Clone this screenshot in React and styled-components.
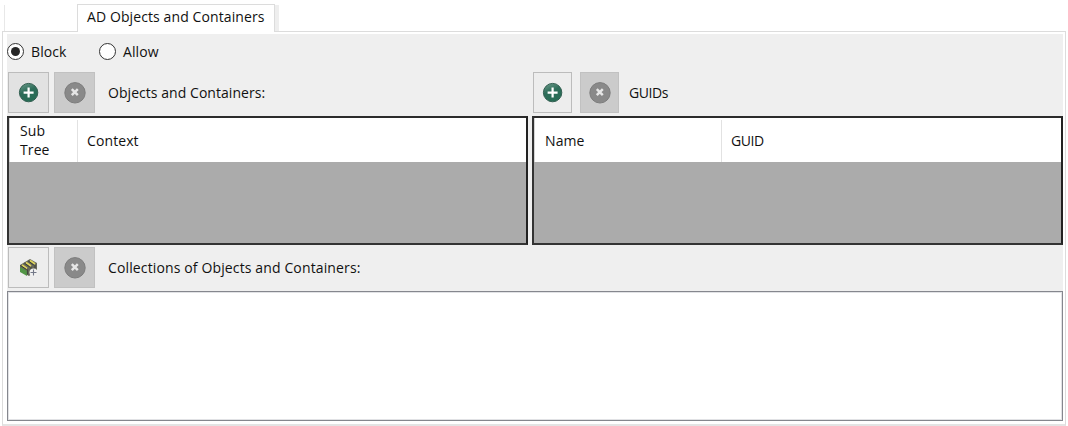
import React from 'react';
import styled, { createGlobalStyle } from 'styled-components';

const Global = createGlobalStyle`
  * { box-sizing: border-box; }
  html, body { margin: 0; background: #fff; }
  body {
    font-family: "Open Sans", "Noto Sans", sans-serif;
    font-size: 14px;
    line-height: 19px;
    letter-spacing: 0.1px;
    color: #111;
  }
`;

const Window = styled.main`
  width: 1068px;
  height: 426px;
  padding: 4px 2px 0;
  display: flex;
  flex-direction: column;
`;

const TabStrip = styled.nav`
  display: flex;
  height: 28px;
  padding-left: 2px;
  align-items: flex-end;
`;

const TabEdge = styled.span`
  width: ${p => p.$width}px;
  height: 26px;
  border-left: ${p => (p.$filled ? '0' : '1px solid #e8e8e8')};
  background: ${p => (p.$filled ? '#eee' : '#fff')};
  margin-bottom: 1px;
`;

const Tab = styled.span`
  width: 198px;
  height: 28px;
  padding: 2px 0 0 9px;
  border: 1px solid #dcdcdc;
  border-bottom: 0;
  background: #fff;
  white-space: nowrap;
  z-index: 1;
`;

const Page = styled.section`
  width: 1064px;
  height: 395px;
  margin-top: -1px;
  padding: 2px 2px 0 4px;
  border: 1px solid #dcdcdc;
  border-bottom-width: 2px;
  border-bottom-color: #e4e4e4;
  background: #fff;
`;

const Body = styled.div`
  display: flex;
  flex-direction: column;
  width: 1056px;
  height: 387px;
  background: #efefef;
`;

const Choices = styled.div`
  display: flex;
  flex: none;
  height: 36px;
  padding-top: 8px;
`;

const Choice = styled.label`
  display: flex;
  align-items: center;
  gap: 7px;
  width: 92px;
  height: 19px;
`;

const Radio = styled.span`
  display: grid;
  place-items: center;
  width: 17px;
  height: 17px;
  border: 1px solid #333;
  border-radius: 50%;
  background: #fff;
  &::after {
    content: '';
    width: 9px;
    height: 9px;
    border-radius: 50%;
    background: ${p => (p.$on ? '#262626' : 'transparent')};
  }
`;

const Columns = styled.div`
  display: flex;
  flex: none;
  gap: 4px;
`;

const Column = styled.div`
  width: ${p => p.$width}px;
`;

const Toolbar = styled.div`
  display: flex;
  flex: none;
  align-items: center;
  gap: ${p => p.$gap}px;
  height: 46px;
  padding: 2px 0 3px 1px;
`;

const Button = styled.button`
  display: grid;
  place-items: center;
  width: ${p => p.$width}px;
  height: 41px;
  padding: 0;
  border: 1px solid ${p => (p.disabled ? '#c1c1c1' : '#bcbcbc')};
  background: ${p => (p.disabled ? '#cbcbcb' : p.$light ? '#ededed' : '#e2e2e2')};
`;

const Caption = styled.span`
  margin-left: ${p => p.$offset}px;
  white-space: nowrap;
  letter-spacing: ${p => p.$track ?? 0.06}px;
`;

const Grid = styled.div`
  height: 129px;
  border: 2px solid #333;
  border-top-color: #2b2b2b;
  border-right-color: #222;
  background: #ababab;
`;

const Head = styled.div`
  display: flex;
  height: 44px;
  border-left: 1px solid #d5d5d5;
  background: #fff;
`;

const Cell = styled.div`
  display: flex;
  align-items: center;
  width: ${p => p.$width}px;
  margin-top: 2px;
  padding: 0 0 2px ${p => p.$pad}px;
  border-right: ${p => (p.$line ? '1px solid #e2e2e2' : '0')};
  letter-spacing: ${p => p.$track ?? 0.1}px;
`;

const ListBox = styled.div`
  height: 130px;
  flex: none;
  border: 1px solid #85878e;
  box-shadow: inset 0 0 0 1px #e1e2e5;
  background: #fff;
`;

const AddIcon = () => (
  <svg width="22" height="22" viewBox="0 0 22 22">
    <defs>
      <linearGradient id="green" x1="0" y1="0" x2="0.4" y2="1">
        <stop offset="0" stopColor="#6f9d8d" />
        <stop offset="0.5" stopColor="#2d6d59" />
        <stop offset="1" stopColor="#276c55" />
      </linearGradient>
    </defs>
    <circle cx="10.6" cy="10.6" r="9.2" fill="url(#green)" stroke="#315e50" />
    <path d="M10.6 5.6v10M5.6 10.6h10" stroke="#fff" strokeWidth="2.2" />
  </svg>
);

const RemoveIcon = () => (
  <svg width="24" height="24" viewBox="0 0 24 24">
    <circle cx="12" cy="11.8" r="10.2" fill="#898989" stroke="#7d7d7d" />
    <path d="M8.8 8.2l6 6M14.8 8.2l-6 6" stroke="#e6e6e6" strokeWidth="2.5" />
  </svg>
);

const CollectionIcon = () => (
  <svg width="22" height="22" viewBox="0 0 22 22">
    <path d="M2 8l10-6 7 4v7l-8 6-9-5z" fill="#68695b" />
    <path d="M2 10l7 4v5l-7-4z" fill="#529546" />
    <path d="M4 8l5 3.5M8 5.5l5 3.5M12 3.5l5 3.5" stroke="#ddd35d" strokeWidth="1.8" />
    <path d="M2.5 8.5l6 4M6.3 6l5.5 4M10.3 4l5.5 4" stroke="#3b3d32" strokeWidth="1" />
    <path d="M13 10v3M17 8v3M9.5 12.5v5" stroke="#43453e" strokeWidth="1.2" />
    <circle cx="15.5" cy="15.5" r="4" fill="#f0f0f0" />
    <path d="M15.5 12.5v6M12.5 15.5h6" stroke="#737888" strokeWidth="1.1" />
  </svg>
);

export default function App() {
  return (
    <>
      <Global />
      <Window>
        <TabStrip>
          <TabEdge $width={73} />
          <Tab>AD Objects and Containers</Tab>
          <TabEdge $width={4} $filled />
        </TabStrip>
        <Page>
          <Body>
            <Choices>
              <Choice><Radio $on />Block</Choice>
              <Choice><Radio />Allow</Choice>
            </Choices>
            <Columns>
              <Column $width={521}>
                <Toolbar $gap={5}>
                  <Button $width={41}><AddIcon /></Button>
                  <Button $width={41} disabled><RemoveIcon /></Button>
                  <Caption $offset={8} $track={0.05}>Objects and Containers:</Caption>
                </Toolbar>
                <Grid>
                  <Head>
                    <Cell $width={68} $pad={10} $line>Sub<br />Tree</Cell>
                    <Cell $width={400} $pad={9}>Context</Cell>
                  </Head>
                </Grid>
              </Column>
              <Column $width={531}>
                <Toolbar $gap={8}>
                  <Button $width={39} $light><AddIcon /></Button>
                  <Button $width={39} disabled><RemoveIcon /></Button>
                  <Caption $offset={2} $track={-0.4}>GUIDs</Caption>
                </Toolbar>
                <Grid>
                  <Head>
                    <Cell $width={187} $pad={10} $line>Name</Cell>
                    <Cell $width={300} $pad={9} $track={-0.4}>GUID</Cell>
                  </Head>
                </Grid>
              </Column>
            </Columns>
            <Toolbar $gap={5}>
              <Button $width={41} $light><CollectionIcon /></Button>
              <Button $width={41} disabled><RemoveIcon /></Button>
              <Caption $offset={8} $track={0.13}>Collections of Objects and Containers:</Caption>
            </Toolbar>
            <ListBox />
          </Body>
        </Page>
      </Window>
    </>
  );
}
